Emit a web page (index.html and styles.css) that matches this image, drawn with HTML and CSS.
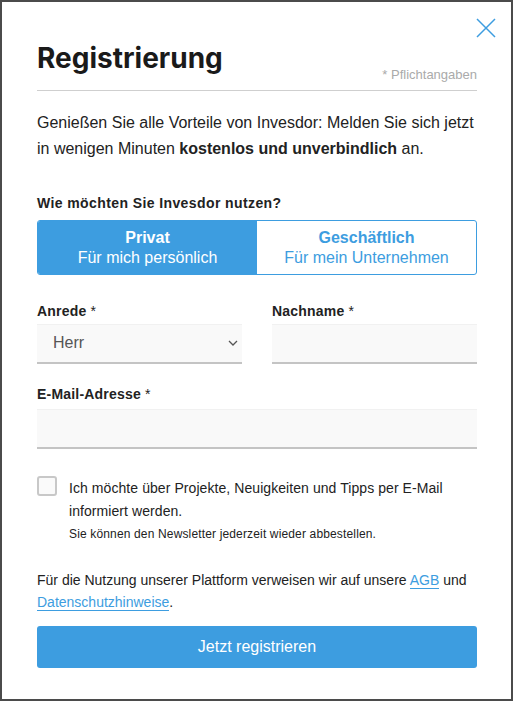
FILE: index.html
```html
<!DOCTYPE html>
<html lang="de">
<head>
<meta charset="utf-8">
<title>Registrierung</title>
<link rel="stylesheet" href="styles.css">
</head>
<body>
<div class="modal">
  <button class="close" aria-label="Schließen">
    <svg width="20" height="20" viewBox="0 0 20 20"><path d="M1 1 L19 19 M19 1 L1 19" stroke="#3d9de0" stroke-width="1.5" fill="none"/></svg>
  </button>
  <header class="head">
    <h1>Registrierung</h1>
    <span class="req">* Pflichtangaben</span>
  </header>
  <p class="intro">Genießen Sie alle Vorteile von Invesdor: Melden Sie sich jetzt in wenigen Minuten <strong>kostenlos und unverbindlich</strong> an.</p>
  <div class="question">Wie möchten Sie Invesdor nutzen?</div>
  <div class="toggle">
    <div class="opt active"><b>Privat</b><span>Für mich persönlich</span></div>
    <div class="opt"><b>Geschäftlich</b><span>Für mein Unternehmen</span></div>
  </div>
  <div class="row">
    <div class="field">
      <label>Anrede <span class="ast">*</span></label>
      <div class="select">Herr
        <svg width="10" height="6" viewBox="0 0 10 6"><path d="M1 1 L5 5 L9 1" stroke="#555" stroke-width="1.3" fill="none"/></svg>
      </div>
    </div>
    <div class="field">
      <label>Nachname <span class="ast">*</span></label>
      <div class="input"></div>
    </div>
  </div>
  <div class="field email">
    <label>E-Mail-Adresse <span class="ast">*</span></label>
    <div class="input"></div>
  </div>
  <div class="check">
    <span class="box"></span>
    <div class="checktext">
      <p>Ich möchte über Projekte, Neuigkeiten und Tipps per E-Mail informiert werden.</p>
      <small>Sie können den Newsletter jederzeit wieder abbestellen.</small>
    </div>
  </div>
  <p class="terms">Für die Nutzung unserer Plattform verweisen wir auf unsere <a href="#">AGB</a> und <a href="#">Datenschutzhinweise</a>.</p>
  <button class="submit">Jetzt registrieren</button>
</div>
</body>
</html>
```

FILE: styles.css
```css
* { box-sizing: border-box; }
html, body { margin: 0; padding: 0; }
body {
  background: #4b4b4b;
  padding: 2px;
  font-family: "Liberation Sans", Arial, sans-serif;
  color: #222;
  height: 701px;
  overflow: hidden;
}
.modal {
  position: relative;
  background: #fff;
  width: 509px;
  height: 697px;
  padding: 38px 34px 0 35px;
}
.close {
  position: absolute;
  top: 16px;
  right: 15px;
  width: 20px;
  height: 20px;
  padding: 0;
  border: 0;
  background: none;
}
.close svg { display: block; }
.head {
  display: flex;
  justify-content: space-between;
  align-items: flex-end;
  border-bottom: 1px solid #cfcfcf;
  padding-bottom: 14px;
}
h1 {
  margin: 0;
  font-family: "Inter", sans-serif;
  font-weight: 700;
  font-size: 28px;
  letter-spacing: 0;
  line-height: 36px;
  color: #1a1a1a;
}
.req {
  font-size: 13px;
  color: #aaa;
  line-height: 14px;
  margin-bottom: -6px;
}
.intro {
  margin: 19px 0 0;
  font-size: 16px;
  line-height: 26px;
}
.question {
  margin-top: 33px;
  font-weight: 700;
  font-size: 14px;
  letter-spacing: 0.4px;
  line-height: 16px;
}
.toggle {
  display: flex;
  margin-top: 9px;
  border: 1px solid #3d9de0;
  border-radius: 3px;
  overflow: hidden;
  height: 55px;
}
.opt {
  flex: 1;
  display: flex;
  flex-direction: column;
  align-items: center;
  justify-content: center;
  color: #3d9de0;
  font-size: 16px;
  line-height: 20px;
}
.opt b { font-weight: 700; }
.opt.active { background: #3d9de0; color: #fff; }
.row {
  display: grid;
  grid-template-columns: 1fr 1fr;
  column-gap: 30px;
  margin-top: 27px;
}
.field label {
  display: block;
  font-weight: 700;
  font-size: 14px;
  line-height: 18px;
  letter-spacing: 0.2px;
}
.ast { font-weight: 400; }
.select, .input {
  margin-top: 4px;
  height: 40px;
  background: #f9f9f9;
  border-bottom: 2px solid #c4c4c4;
  box-shadow: inset 0 1px 0 #f1f1f1;
}
.select {
  display: flex;
  align-items: center;
  justify-content: space-between;
  padding: 0 4px 0 16px;
  font-size: 16px;
  color: #555;
}
.email { margin-top: 21px; }
.email .input { margin-top: 6px; }
.check {
  display: flex;
  gap: 12px;
  margin-top: 27px;
}
.box {
  flex: none;
  width: 20px;
  height: 20px;
  border: 2px solid #c8c8c8;
  border-radius: 3px;
  background: #fafafa;
}
.checktext { padding-top: 1px; }
.checktext p {
  margin: 0;
  font-size: 14px;
  line-height: 23px;
  letter-spacing: 0.07px;
  color: #222;
}
.checktext small {
  display: block;
  font-size: 12px;
  line-height: 20px;
  margin-top: 1px;
  letter-spacing: 0.15px;
}
.terms {
  margin: 25px 0 0;
  font-size: 14px;
  line-height: 22px;
}
.terms a {
  color: #3d9de0;
  text-decoration: none;
  border-bottom: 1px solid #3d9de0;
}
.submit {
  display: block;
  width: 100%;
  margin-top: 13px;
  height: 42px;
  background: #3d9de0;
  border: 0;
  border-radius: 3px;
  color: #fff;
  font-family: "Liberation Sans", Arial, sans-serif;
  font-size: 16px;
}
```
